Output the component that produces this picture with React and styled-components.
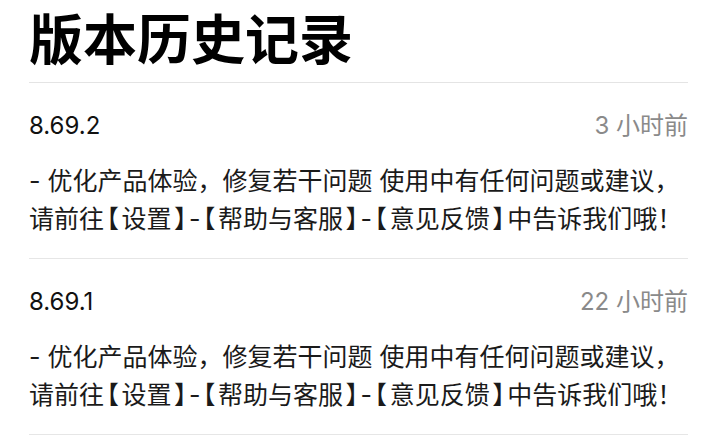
import styled, { createGlobalStyle } from "styled-components"

const GlobalStyle = createGlobalStyle`
  html, body {
    margin: 0;
    padding: 0;
    background: #ffffff;
  }
  body {
    font-family: Inter, "Noto Sans CJK SC", sans-serif;
    -webkit-font-smoothing: antialiased;
  }
`

const releases = [
  { version: "8.69.2", time: "3 小时前" },
  { version: "8.69.1", time: "22 小时前" },
]

// one bracket group like 【设置】, brackets drawn half width
const Tag = ({ children }) => (
  <>
    <Bracket>【</Bracket>
    {children}
    <Bracket>】</Bracket>
  </>
)

const Notes = () => (
  <Body>
    - 优化产品体验，修复若干问题 使用中有任何问题或建议，请前往
    <Tag>设置</Tag>-<Tag>帮助与客服</Tag>-<Tag>意见反馈</Tag>
    中告诉我们哦！
  </Body>
)

const App = () => {
  return (
    <Page>
      <GlobalStyle />
      <Title>版本历史记录</Title>
      <List>
        {releases.map((item) => (
          <Item key={item.version}>
            <Header>
              <Version>{item.version}</Version>
              <Time>{item.time}</Time>
            </Header>
            <Notes />
          </Item>
        ))}
      </List>
    </Page>
  )
}

const Page = styled.main`
  width: 659px;
  padding: 0 24px 0 29px;
`

const Title = styled.h1`
  margin: 0;
  padding-bottom: 8px;
  border-bottom: 1px solid #e4e4e4;
  font-family: "Noto Sans CJK SC", sans-serif;
  font-size: 54px;
  line-height: 74px;
  font-weight: 700;
  color: #000;
`

const List = styled.div`
  display: flex;
  flex-direction: column;
`

const Item = styled.section`
  display: flex;
  flex-direction: column;
  gap: 22px;
  padding: 28px 0 21px;
  border-bottom: 1px solid #e6e6e6;
`

const Header = styled.div`
  display: flex;
  justify-content: space-between;
  align-items: center;
  height: 30px;
`

const Version = styled.span`
  font-size: 24px;
  line-height: 30px;
  color: #111;
`

const Time = styled.span`
  font-size: 24px;
  line-height: 30px;
  color: #8a8a8a;
`

const Body = styled.p`
  margin: 0;
  font-size: 25px;
  line-height: 36px;
  color: #1a1a1a;
`

const Bracket = styled.span`
  font-family: "Noto Sans CJK SC", sans-serif;
  font-feature-settings: "halt";
  padding: 0 2.5px;
`

export default App
